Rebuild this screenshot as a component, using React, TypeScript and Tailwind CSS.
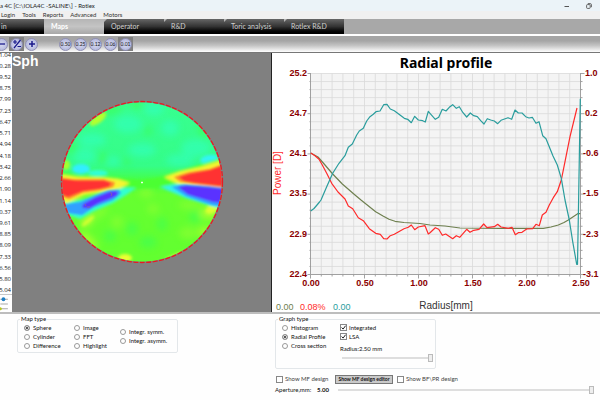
import { useState } from 'react';
import type { ReactNode } from 'react';

const MENU = ['Login', 'Tools', 'Reports', 'Advanced', 'Motors'];
const TABS = ['in', 'Maps', 'Operator', 'R&D', 'Toric analysis', 'Rotlex R&D'];
const STEPS = ['0.50', '0.25', '0.12', '0.06', '0.01'];
const SCALE = [
  '1.04', '0.28', '9.52', '8.75', '7.99', '7.23', '6.47', '5.71', '4.94', '4.18', '3.42',
  '2.66', '1.90', '1.14', '0.37', '9.61', '8.85', '8.09', '7.33', '6.56', '5.80', '5.04',
];

const LSA_LINE =
  '310.7,211 314,208.5 317,205 319.5,202 321,200 326.7,186.7 332.7,173.3 339,163.3 345,155.7 348.3,147.3 352.3,144 356.7,135 359.3,131 363.3,128.3 366.7,121 370,116.7 373.3,114.3 376,111.7 380,111 383.7,104.7 387,104.3 390.3,109 394.3,110.7 400,115 404.3,118.3 407.7,119.3 411.3,122.7 414.7,116.3 418.3,120 422.7,120.7 425.3,122 428.3,111.3 430,113.3 435.3,119.3 438.7,117.3 442.3,109.3 446,111 449.3,107.3 452.7,104.7 456.3,108.3 459.3,106.7 463,112.7 466.7,117 470.3,113 473.7,115.7 477.3,116.7 480.7,120.7 484,124 487.3,118.7 490.7,120 494.3,121 497.7,123.7 501,120.3 508,117.7 511.7,119.3 515,110 518.3,113 522,113 525.7,116.7 529,118 532.3,117.3 536,123.3 539,121.7 542.7,135.7 546,138.7 553,156 557.3,165 561.3,178.3 565,200 569.3,220 572.7,241.7 576.7,264.3 577.5,264.3 578.7,195 580.3,98.7';
const POWER_LINE =
  '310.7,153 315,155.7 319,159.3 322.3,165 326.7,173.3 331.7,183.3 338,192 345,199 348.3,206 352.7,208.7 358.3,217.7 363.3,220.7 369.3,228.7 375.7,233.3 380.3,234.3 383.7,238.7 387,239 390.3,235.7 394.3,234.3 404,228.7 408.3,227.3 411.3,225 414.7,229.7 418.3,227 425,225.7 428.3,234 430,232.7 435.3,227.7 438.7,229.3 442.3,235.3 445.7,234 452.7,238.7 456.3,235.7 459.7,237.3 466.7,229.3 470,232.3 473.7,230.3 479,229.3 483.7,224 487,227.7 494.3,226.7 497.7,224.3 501,227 508.3,228.3 512,227.3 515.3,234.7 518.3,232.7 522,232.3 526.7,229 532.7,228.7 536,224.3 539.3,225.7 542.3,215 546,212.3 549.3,205 553.3,197.7 557.3,191.7 561.3,180 565,161.7 570,136.7 577,108';
const AVERAGE_LINE =
  '310.7,153 318,157 325,165 332.7,174 342.3,184 355,195 361,200 375.7,211.7 383,216 389,219.3 395,221.3 404,222.5 420,223.5 430,225 445,226 460,228 500,228.3 543.3,228.3 551,227 558.3,225 564,222.5 568.3,220 577.7,213.7 580.3,213.7';

const Y_TICKS = [
  { y: 73, left: '25.2', right: '1.0' },
  { y: 113, left: '24.7', right: '0.2' },
  { y: 153, left: '24.1', right: '-0.6' },
  { y: 193, left: '23.5', right: '-1.5' },
  { y: 234, left: '22.9', right: '-2.3' },
  { y: 274, left: '22.4', right: '-3.1' },
];
const X_TICKS = ['0.00', '0.50', '1.00', '1.50', '2.00', '2.50'];

const range = (n: number) => Array.from({ length: n }, (_, i) => i);

const TitleBar = () => (
  <header className="flex h-[11px] items-center justify-between bg-[#ebf3f8] text-[#222]">
    <h1 className="text-[6px] leading-none whitespace-nowrap">a 4C [C:\IOLA4C -SALINE\] - Rotlex</h1>
    <div className="flex gap-4 pr-2">
      <button type="button" aria-label="Minimize">
        <svg className="size-[6px]" viewBox="0 0 6 6" stroke="#555" fill="none">
          <path d="M0.5 3.5h4.5" />
        </svg>
      </button>
      <button type="button" aria-label="Restore">
        <svg className="size-[6px]" viewBox="0 0 6 6" stroke="#555" fill="none" strokeWidth="0.9">
          <rect x="0.6" y="1.6" width="3.6" height="3.8" rx="0.8" />
          <path d="M1.8 0.6h2.4q1.2 0 1.2 1.2v2.4" />
        </svg>
      </button>
    </div>
  </header>
);

const TabBar = ({ active, onSelect }: { active: string; onSelect: (tab: string) => void }) => (
  <div className="flex h-[15px] bg-[#a8a8a8]">
    {TABS.map((tab, i) => (
      <button
        key={tab}
        type="button"
        onClick={() => onSelect(tab)}
        className={`relative flex items-center text-left text-[7px] leading-none whitespace-nowrap ${
          i === 0 ? 'w-[44px] pl-px' : 'w-[60px] pl-[7px]'
        } ${
          tab === active
            ? 'bg-linear-to-b from-[#b5b5b5] via-[#c4c4c4] to-[#a8a8a8] font-bold text-white'
            : 'bg-linear-to-b from-[#666] via-[#333] to-black text-[#d0d0d0]'
        }`}
      >
        {i > 0 && (
          <svg className="absolute top-0 left-0 size-[3px]" viewBox="0 0 3 3" fill="#b5b5b5">
            <path d="M0 0h3L0 3z" />
          </svg>
        )}
        {tab}
      </button>
    ))}
  </div>
);

const RoundButton = ({ label, pressed, children }: { label: string; pressed?: boolean; children: ReactNode }) => (
  <button
    type="button"
    aria-label={label}
    className={`flex h-[14px] w-[15px] shrink-0 items-center justify-center ${pressed ? 'bg-[#808080]' : ''}`}
  >
    <span className="flex size-[13px] items-center justify-center rounded-full border border-[#8f8fb4] bg-radial from-[#d8dbf2] to-[#a9aed6]">
      {children}
    </span>
  </button>
);

const Toolbar = () => (
  <div className="flex h-[16px] items-center bg-linear-to-b from-[#a5a5a5] from-30% via-[#c4c4c4] via-60% to-white">
    <div className="-ml-[6px] flex">
      <RoundButton label="Minus">
        <svg className="size-[8px] shrink-0" viewBox="0 0 8 8" stroke="#1a1a8c" strokeWidth="1.3">
          <path d="M1 4h6" />
        </svg>
      </RoundButton>
      <RoundButton label="Plus or minus" pressed>
        <svg className="size-[10px] shrink-0" viewBox="0 0 10 10" stroke="#1a1a8c" strokeWidth="1.2" fill="none">
          <path d="M1 3h4M3 1v4M5.5 7.5h3.5M8.5 1L2 9" />
        </svg>
      </RoundButton>
      <RoundButton label="Plus">
        <svg className="size-[8px] shrink-0" viewBox="0 0 8 8" stroke="#1a1a8c" strokeWidth="1.5">
          <path d="M1 4h6M4 1v6" />
        </svg>
      </RoundButton>
    </div>
    <div className="ml-[19px] flex">
      {STEPS.map((step) => (
        <RoundButton key={step} label={step} pressed={step === '0.01'}>
          <span className="text-[5px] leading-none text-[#111]">{step}</span>
        </RoundButton>
      ))}
    </div>
  </div>
);

const ScaleBar = () => (
  <div className="flex flex-col overflow-hidden bg-white font-['Open_Sans',sans-serif]">
    <ol className="-mt-[2px] flex flex-1 flex-col justify-between overflow-hidden">
      {SCALE.map((value) => (
        <li key={value} className="flex h-[7px] items-center justify-end pr-px text-[6px] leading-none text-[#222]">
          {value}
        </li>
      ))}
    </ol>
    <svg className="h-[18px] w-full shrink-0 border-t border-[#c8c8c8]" viewBox="0 0 12 18">
      <path d="M0 4.5h8M0 9.5h8M0 14.5h8" stroke="#a9a9a9" strokeWidth="1.2" />
      <circle cx="3.3" cy="4.5" r="2" fill="#1f7fc4" />
      <circle cx="0" cy="14.5" r="1.6" fill="#b9c820" />
    </svg>
  </div>
);

const SphereMap = () => (
  <section className="border-r border-[#222] bg-[#808080]" aria-label="Sphere map">
    <svg className="block w-full" viewBox="12 53 259 259">
      <defs>
        <clipPath id="lens">
          <circle cx="142" cy="182" r="80" />
        </clipPath>
        <linearGradient id="base" x1="0" y1="102" x2="0" y2="262" gradientUnits="userSpaceOnUse">
          <stop offset="0" stopColor="#38ff90" />
          <stop offset="0.4" stopColor="#35fd88" />
          <stop offset="0.5" stopColor="#48ff40" />
          <stop offset="0.58" stopColor="#66ff30" />
          <stop offset="1" stopColor="#62ff30" />
        </linearGradient>
        <filter id="soft" x="-50%" y="-50%" width="200%" height="200%">
          <feGaussianBlur stdDeviation="3.5" />
        </filter>
        <filter id="mid" x="-50%" y="-50%" width="200%" height="200%">
          <feGaussianBlur stdDeviation="1.8" />
        </filter>
        <filter id="tight" x="-50%" y="-50%" width="200%" height="200%">
          <feGaussianBlur stdDeviation="0.8" />
        </filter>
      </defs>
      <g clipPath="url(#lens)">
        <rect x="60" y="100" width="164" height="164" fill="url(#base)" />
        {/* slow background variation */}
        <g filter="url(#soft)" opacity="0.65">
          <g fill="#33ffbe">
            <ellipse cx="154" cy="109" rx="10" ry="7" />
            <ellipse cx="128" cy="124" rx="14" ry="9" />
            <ellipse cx="170" cy="128" rx="9" ry="8" />
            <ellipse cx="92" cy="140" rx="14" ry="7" />
            <ellipse cx="142" cy="150" rx="14" ry="7" />
            <ellipse cx="84" cy="156" rx="12" ry="8" />
            <ellipse cx="196" cy="148" rx="15" ry="9" />
            <ellipse cx="112" cy="161" rx="8" ry="5" />
            <ellipse cx="180" cy="160" rx="14" ry="6" />
          </g>
          <g fill="#3cff55">
            <ellipse cx="137" cy="104" rx="7" ry="5" />
            <ellipse cx="109" cy="110" rx="14" ry="5" />
            <ellipse cx="126" cy="162" rx="4" ry="4" />
            <ellipse cx="148" cy="131" rx="4" ry="5" />
            <ellipse cx="103" cy="158" rx="5" ry="6" />
            <ellipse cx="204" cy="130" rx="6" ry="9" />
            <ellipse cx="132" cy="229" rx="6" ry="7" />
            <ellipse cx="110" cy="236" rx="6" ry="6" />
            <ellipse cx="148" cy="242" rx="9" ry="6" />
            <ellipse cx="195" cy="217" rx="6" ry="6" />
            <ellipse cx="162" cy="224" rx="5" ry="7" />
            <ellipse cx="72" cy="148" rx="5" ry="8" />
          </g>
          <g fill="#90ff30">
            <ellipse cx="146" cy="192" rx="7" ry="6" />
            <ellipse cx="153" cy="209" rx="6" ry="5" />
            <ellipse cx="117" cy="222" rx="6" ry="6" />
            <ellipse cx="96" cy="215" rx="14" ry="5" transform="rotate(-30 96 215)" />
            <ellipse cx="188" cy="233" rx="9" ry="6" />
            <ellipse cx="190" cy="205" rx="12" ry="4" />
          </g>
          <g fill="#ccff2e">
            <ellipse cx="86" cy="222" rx="6" ry="5" />
            <ellipse cx="88" cy="241" rx="12" ry="5" transform="rotate(45 88 241)" />
            <ellipse cx="209" cy="213" rx="9" ry="6" />
            <ellipse cx="205" cy="232" rx="7" ry="5" />
          </g>
        </g>
        <g filter="url(#mid)">
          <ellipse cx="98" cy="119" rx="10" ry="4" fill="#b4ff2e" transform="rotate(-38 98 119)" />
          <ellipse cx="66" cy="165" rx="4" ry="5" fill="#a4ff2e" />
          <ellipse cx="125" cy="258" rx="7" ry="4" fill="#ecff30" />
          <ellipse cx="176" cy="257" rx="15" ry="3" fill="#d8ff30" transform="rotate(-22 176 257)" />
          <ellipse cx="212" cy="209" rx="7" ry="4" fill="#dcff30" transform="rotate(-25 212 209)" />
          <ellipse cx="88" cy="221" rx="8" ry="2" fill="#d4ff30" transform="rotate(-40 88 221)" />
          {/* cyan spots above the wedges */}
          <ellipse cx="81" cy="169" rx="9" ry="5" fill="#33eeff" />
          <ellipse cx="98" cy="173" rx="10" ry="3" fill="#33ffd8" />
          <ellipse cx="209" cy="159" rx="9" ry="4" fill="#33f4f4" transform="rotate(-12 209 159)" />
          {/* green rims and cyan halos of the blue lobes */}
          <path d="M60 172L80 176L110 177L140 180L160 177L224 157V172L160 188L110 190L60 200Z" fill="#4cff33" />
          <path d="M62 203L86 199L104 192L122 188L136 188L126 195L113 203L94 211L80 219L66 214Z" fill="#33ffd0" />
          <path d="M160 187L178 184L200 186L226 189V210L212 206L186 198Z" fill="#33f2f0" />
          {/* yellow halos */}
          <path d="M58 174L78 177L104 177.500L118 179L130 183L119 189L102 192L84 195L66 204L58 198Z" fill="#f6f430" />
          <path d="M164 177L180 171L200 167L226 159V190L196 186L178 184Z" fill="#f6f430" />
        </g>
        <g filter="url(#tight)">
          <path d="M62 205L80 202L94 196L108 190.500L119 190L121 193L113 200L94 207L82 215L68 213Z" fill="#30a0ff" />
          <path d="M83 204L96 197L110 191.500L117 191L117.500 195L112 198L99 203L89 208.500L82 208Z" fill="#5a30ff" />
          <path d="M172 187L184 184.500L208 186L226 188V207L212 205L186 196Z" fill="#30a0ff" />
          <path d="M178 187L186 185.500L206 187L226 189V203L213 202L188 194.500Z" fill="#5a30ff" />
          <path d="M56 177L74 179.500L104 179.500L115 182.500L113 187L100 190L83 192.500L69 199L56 194Z" fill="#ff8a2a" />
          <path d="M56 178L76 180.500L104 180.500L111 183L109 186.500L99 189L83 191L68 197L56 192Z" fill="#ff3030" />
          <path d="M174 177L188 172.500L210 169L226 163V187.500L196 184L180 181.500Z" fill="#ff8a2a" />
          <path d="M179 177L190 173.500L210 170L226 164V186.500L196 183L184 181Z" fill="#ff3030" />
        </g>
        <path d="M110 192l2 2-1 2M85 204l1 2M87 207h3" stroke="#7a62b0" strokeWidth="1" fill="none" />
      </g>
      <circle cx="142" cy="182" r="80.500" fill="none" stroke="#808080" strokeWidth="1.600" />
      <circle cx="142" cy="182" r="80.500" fill="none" stroke="#e81c22" strokeWidth="1.300" strokeDasharray="5 1.500" />
      <path d="M141 182.500h2M142 181.500v2" stroke="#fff" strokeWidth="0.800" />
      <text x="12" y="66" fill="#fff" className="font-['Liberation_Sans',sans-serif] text-[14px] font-bold">Sph</text>
    </svg>
  </section>
);

const RadialChart = () => (
  <section className="bg-white" aria-label="Radial profile">
    <svg className="block w-full font-['Liberation_Sans',sans-serif]" viewBox="272 53 328 258">
      <text x="446" y="68" textAnchor="middle" className="font-['Noto_Sans',sans-serif] text-[14px] font-bold">
        Radial profile
      </text>
      <rect x="310.500" y="73.500" width="270" height="201" fill="#f4f4f4" />
      <g stroke="#d9d9d9" strokeWidth="0.800">
        {range(26).map((i) => (
          <path key={`v${i}`} d={`M${310.5 + i * 10.8} 73.500v201`} />
        ))}
        {range(26).map((i) => (
          <path key={`h${i}`} d={`M310.500 ${73.5 + i * 8.04}h270`} />
        ))}
      </g>
      <g stroke="#999" strokeWidth="0.900">
        <path d="M310.500 73v201.500H580.500V73" fill="none" />
        {range(26).map((i) => (
          <path
            key={i}
            d={`M${310.5 + i * 10.8} 274.500v${i % 5 === 0 ? 4 : 2}M310.500 ${73.5 + i * 8.04}h${i % 5 === 0 ? -3 : -1}M580.500 ${73.5 + i * 8.04}h${i % 5 === 0 ? 4 : 2}`}
          />
        ))}
      </g>
      <g fill="none" strokeWidth="1.200" strokeLinejoin="round">
        <polyline points={AVERAGE_LINE} stroke="#6f8050" />
        <polyline points={POWER_LINE} stroke="#ff2a2a" />
        <polyline points={LSA_LINE} stroke="#2a9d9d" />
      </g>
      <g fill="#8b0000" className="text-[9px] font-bold">
        {Y_TICKS.map((t) => (
          <g key={t.y}>
            <text x="307" y={t.y + 3} textAnchor="end">{t.left}</text>
            <text x={t.right.startsWith('-') ? 583 : 585} y={t.y + 3}>{t.right}</text>
          </g>
        ))}
        {X_TICKS.map((t, i) => (
          <text key={t} x={311 + i * 54} y="286" textAnchor="middle">{t}</text>
        ))}
      </g>
      <text transform="translate(281 195) rotate(-90)" fill="#ff2a2a" className="text-[10px]">Power [D]</text>
      <g className="text-[9px]">
        <text x="276" y="310" fill="#6f8050">0.00</text>
        <text x="300" y="310" fill="#ff2a2a">0.08%</text>
        <text x="333" y="310" fill="#2a9d9d">0.00</text>
      </g>
      <text x="446" y="309" textAnchor="middle" fill="#333" className="text-[10px]">Radius[mm]</text>
    </svg>
  </section>
);

const RadioOption = ({ name, label, checked }: { name: string; label: string; checked?: boolean }) => (
  <label className="flex h-[9px] items-center gap-[3px] whitespace-nowrap">
    <input
      type="radio"
      name={name}
      defaultChecked={checked}
      className="size-[6px] shrink-0 appearance-none rounded-full border border-[#999] bg-white checked:bg-[#222] checked:shadow-[inset_0_0_0_1px_white]"
    />
    {label}
  </label>
);

const CheckOption = ({ label, checked }: { label: string; checked?: boolean }) => (
  <label className="flex h-[9px] items-center gap-[2px] whitespace-nowrap">
    <span className="grid size-[7px] shrink-0">
      <input
        type="checkbox"
        defaultChecked={checked}
        className="peer col-start-1 row-start-1 size-[7px] appearance-none border border-[#888] bg-white"
      />
      <svg
        className="pointer-events-none invisible col-start-1 row-start-1 size-[7px] peer-checked:visible"
        viewBox="0 0 7 7"
        fill="none"
        stroke="#222"
      >
        <path d="M1.600 3.500l1.500 1.600 2.500-3.400" />
      </svg>
    </span>
    {label}
  </label>
);

const Slider = ({ id, className }: { id: string; className: string }) => (
  <input
    id={id}
    type="range"
    min="0"
    max="100"
    defaultValue="100"
    className={`h-[9px] appearance-none bg-transparent [&::-webkit-slider-runnable-track]:h-[2px] [&::-webkit-slider-runnable-track]:bg-[#dedede] [&::-webkit-slider-thumb]:-mt-[3px] [&::-webkit-slider-thumb]:h-[8px] [&::-webkit-slider-thumb]:w-[5px] [&::-webkit-slider-thumb]:appearance-none [&::-webkit-slider-thumb]:border [&::-webkit-slider-thumb]:border-[#bbb] [&::-webkit-slider-thumb]:bg-[#eee] ${className}`}
  />
);

const MapTypePanel = () => (
  <fieldset className="ml-[17px] h-[38px] w-[161px] rounded-[2px] border border-[#e3e7ea] pl-[6px]">
    <legend className="-ml-[4px] px-px text-[6px] leading-[8px]">Map type</legend>
    <div className="flex items-center">
      <div className="w-[50px]">
        <RadioOption name="map" label="Sphere" checked />
        <RadioOption name="map" label="Cylinder" />
        <RadioOption name="map" label="Difference" />
      </div>
      <div className="w-[46px]">
        <RadioOption name="map" label="Image" />
        <RadioOption name="map" label="FFT" />
        <RadioOption name="map" label="Highlight" />
      </div>
      <div>
        <RadioOption name="map" label="Integr. symm." />
        <RadioOption name="map" label="Integr. asymm." />
      </div>
    </div>
  </fieldset>
);

const GraphPanel = () => (
  <div className="min-w-0 flex-1 pl-[4px]">
    <fieldset className="h-[54px] w-[161px] min-w-0 rounded-[2px] border border-[#e3e7ea] pl-[6px]">
      <legend className="-ml-[4px] px-px text-[6px] leading-[8px]">Graph type</legend>
      <div className="flex">
        <div className="w-[58px] shrink-0">
          <RadioOption name="graph" label="Histogram" />
          <RadioOption name="graph" label="Radial Profile" checked />
          <RadioOption name="graph" label="Cross section" />
        </div>
        <div className="flex min-w-0 flex-1 flex-col">
          <CheckOption label="Integrated" checked />
          <CheckOption label="LSA" checked />
          <label htmlFor="radius" className="mt-[3px] leading-[9px]">Radius:2.50 mm</label>
          <Slider id="radius" className="ml-[2px] w-[91px]" />
        </div>
      </div>
    </fieldset>
    <div className="mt-[5px] flex h-[10px] items-center text-[#444]">
      <div className="w-[60px] pl-px">
        <CheckOption label="Show MF design" />
      </div>
      <button
        type="button"
        className="flex h-[9px] w-[58px] items-center justify-center border border-[#777] bg-[#c9c9c9] text-[5px] leading-none font-bold whitespace-nowrap text-[#111]"
      >
        Show MF design editor
      </button>
      <div className="ml-[4px]">
        <CheckOption label="Show BF\PR design" />
      </div>
    </div>
    <div className="mt-px flex h-[10px] items-center pr-[6px]">
      <label htmlFor="aperture" className="w-[42px] whitespace-nowrap">Aperture,mm:</label>
      <output htmlFor="aperture" className="w-[21px] font-bold">5.00</output>
      <Slider id="aperture" className="min-w-0 flex-1" />
    </div>
  </div>
);

const App = () => {
  const [tab, setTab] = useState('Maps');

  return (
    <div className="min-h-screen overflow-hidden bg-[#fefefe] font-['Lato','Open_Sans',sans-serif] text-[#111]">
      <TitleBar />
      <nav className="flex h-[8px] items-center gap-[7px] bg-[#f0f0f0] pl-px text-[6px] leading-none text-[#333]">
        {MENU.map((item) => (
          <button key={item} type="button">{item}</button>
        ))}
      </nav>
      <TabBar active={tab} onSelect={setTab} />
      <div className="h-[2px] bg-white" />
      <Toolbar />
      <main className="grid grid-cols-[12px_260fr_328fr] border-t border-b-2 border-t-[#777] border-b-[#bdbdbd]">
        <ScaleBar />
        <SphereMap />
        <RadialChart />
      </main>
      <div className="flex items-start pt-px text-[6px] leading-none">
        <div className="w-[271px] shrink-0">
          <MapTypePanel />
        </div>
        <GraphPanel />
      </div>
    </div>
  );
};

export default App;
